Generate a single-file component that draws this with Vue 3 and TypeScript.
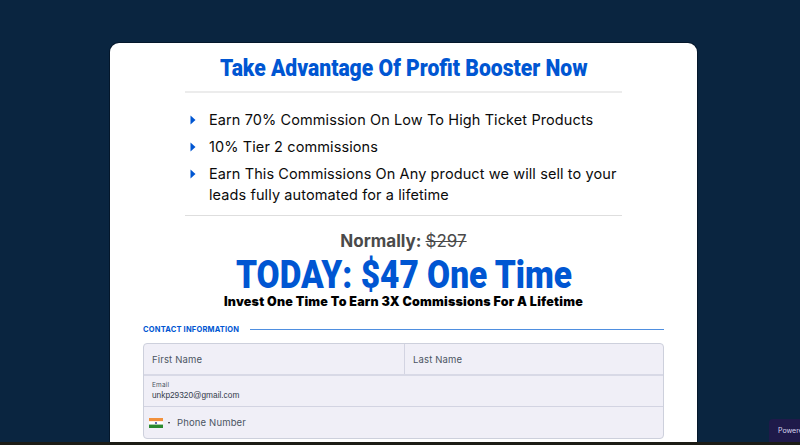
<script setup lang="ts">
const bullets: string[] = [
  'Earn 70% Commission On Low To High Ticket Products',
  '10% Tier 2 commissions',
  'Earn This Commissions On Any product we will sell to your leads fully automated for a lifetime',
]
</script>

<template>
  <div class="page">
    <main class="card">
      <div class="inner">
        <h1 class="title"><span class="squeeze">Take Advantage Of Profit Booster Now</span></h1>
        <ul class="list">
          <li v-for="b in bullets" :key="b" class="item">
            <svg class="arrow" viewBox="0 0 6 10" width="6" height="10"><path d="M0.5 0.5 L5.5 5 L0.5 9.5 Z" fill="#0056d2" /></svg>
            <span>{{ b }}</span>
          </li>
        </ul>
      </div>
      <p class="normally">Normally: <s>$297</s></p>
      <p class="today"><span class="squeeze">TODAY: $47 One Time</span></p>
      <p class="invest">Invest One Time To Earn 3X Commissions For A Lifetime</p>
      <div class="section">
        <span class="section-label">CONTACT INFORMATION</span>
        <span class="section-line"></span>
      </div>
      <form class="form" @submit.prevent>
        <div class="row names">
          <div class="cell first">First Name</div>
          <div class="cell">Last Name</div>
        </div>
        <div class="row email">
          <span class="small">Email</span>
          <span class="value">unkp29320@gmail.com</span>
        </div>
        <div class="row phone">
          <svg class="flag" viewBox="0 0 14 10" width="14" height="10">
            <rect width="14" height="3.4" fill="#f2913c" />
            <rect y="3.3" width="14" height="3.4" fill="#ffffff" />
            <rect y="6.6" width="14" height="3.4" fill="#2a8a2f" />
            <circle cx="7" cy="5" r="1.1" fill="#3a4a9a" />
          </svg>
          <span class="caret"></span>
          <span>Phone Number</span>
        </div>
      </form>
    </main>
    <div class="badge">Powered</div>
    <div class="strip"></div>
  </div>
</template>

<style>
html, body { margin: 0; height: 100%; overflow: hidden; background: #0a2540; }
</style>

<style scoped>
.page {
  position: relative;
  box-sizing: border-box;
  width: 800px;
  height: 445px;
  overflow: hidden;
  padding: 43px 0 0 110px;
  background: #0a2540;
  font-family: "Inter", "Liberation Sans", sans-serif;
}
.card {
  box-sizing: border-box;
  width: 587px;
  height: 420px;
  padding: 0 33px;
  background: #fff;
  border-radius: 9px;
  box-shadow: 0 0 0 1px #04172b;
  text-align: center;
}
.inner { margin: 0 42px; }
.squeeze { display: inline-block; white-space: nowrap; }
.title {
  margin: 0;
  height: 48px;
  border-bottom: 2px solid #ececec;
  box-sizing: content-box;
  font-family: "Roboto", sans-serif;
  font-weight: 900;
  font-size: 24px;
  line-height: 50px;
  color: #0056d2;
  display: flex;
  justify-content: center;
}
.title .squeeze { transform: scaleX(0.88); }
.list {
  margin: 0;
  padding: 16px 0 4px;
  list-style: none;
  border-bottom: 1px solid #dedede;
  text-align: left;
  font-size: 14.5px;
  line-height: 21px;
  color: #0b0b0b;
  letter-spacing: 0.1px;
}
.item { display: flex; gap: 13px; padding: 0 0 6px 5px; }
.arrow { flex: none; margin-top: 6px; }
.normally {
  margin: 15px 0 0;
  font-size: 17px;
  line-height: 20px;
  font-weight: 700;
  color: #4a4a4a;
}
.normally s { font-weight: 400; }
.today {
  margin: 5px 0 0;
  font-family: "Roboto", sans-serif;
  font-weight: 900;
  font-size: 38px;
  line-height: 38px;
  color: #0056d2;
  display: flex;
  justify-content: center;
}
.today .squeeze { transform: scaleX(0.88); }
.invest {
  margin: 0;
  font-size: 12.5px;
  line-height: 16px;
  font-weight: 900;
  letter-spacing: 0.2px;
  color: #000;
}
.section { display: flex; align-items: center; gap: 11px; margin-top: 12px; height: 14px; }
.section-label { font-size: 7.5px; font-weight: 700; color: #0056d2; letter-spacing: 0.2px; white-space: nowrap; }
.section-line { flex: 1; height: 1px; background: #4f8fe0; }
.form {
  box-sizing: border-box;
  margin-top: 7px;
  height: 96px;
  border: 1px solid #cdd0dc;
  border-radius: 4px;
  background: #f0eff7;
  text-align: left;
  font-size: 9.5px;
  color: #4b5563;
  letter-spacing: 0.15px;
}
.row { box-sizing: border-box; }
.names { display: flex; height: 32px; border-bottom: 2px solid #d8d9e6; }
.cell { display: flex; align-items: center; padding-left: 8px; flex: 1; }
.first { flex: none; width: 252px; border-right: 1px solid #d3d4e2; }
.email { display: flex; flex-direction: column; height: 31px; padding: 5px 8px 0; border-bottom: 1px solid #d3d4e2; }
.small { font-size: 6.5px; line-height: 9px; }
.value { font-family: "Liberation Sans", sans-serif; font-size: 8.3px; line-height: 12px; letter-spacing: 0; margin-top: -1px; color: #333b4a; }
.phone { display: flex; align-items: center; height: 31px; padding-left: 5px; }
.flag { flex: none; }
.caret {
  width: 0; height: 0;
  margin: 0 7px 0 5px;
  border-left: 1.5px solid transparent;
  border-right: 1.5px solid transparent;
  border-top: 2px solid #222;
}
.badge {
  position: absolute;
  left: 769px;
  top: 419px;
  width: 31px;
  height: 23px;
  box-sizing: border-box;
  padding: 7px 0 0 9px;
  overflow: hidden;
  background: #1f1a4a;
  border-radius: 4px 0 0 0;
  color: #d9d6f0;
  font-size: 7px;
}
.strip {
  position: absolute;
  left: 0;
  right: 0;
  top: 442px;
  height: 3px;
  background: #1c1c16;
}
</style>
